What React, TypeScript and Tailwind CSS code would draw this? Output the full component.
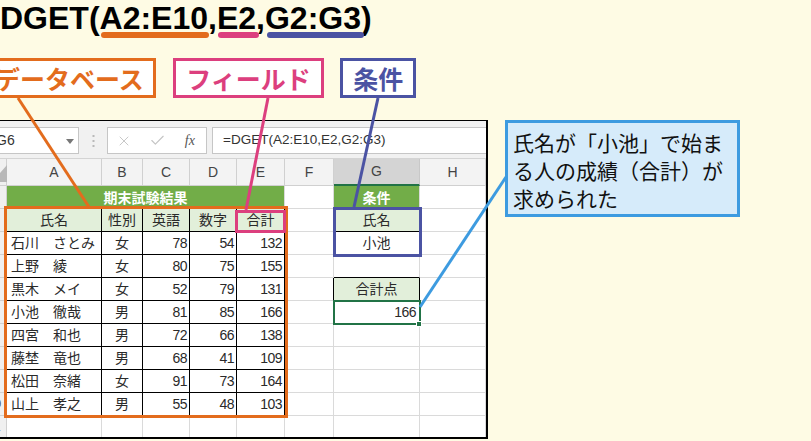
import React from "react";
import { X, Check } from "lucide-react";

const OR = "#e36c1d";
const PK = "#dc3f7e";
const BL = "#4b53a3";

function Cell({ c = "", children }: { c?: string; children?: React.ReactNode }) {
  return (
    <div className={"flex h-[23px] items-center overflow-hidden whitespace-nowrap border-r border-b " + c}>
      {children}
    </div>
  );
}

function RH({ n }: { n: number }) {
  return (
    <Cell c="bg-[#f0f0f0] border-[#d0d0d0] text-[13px] text-[#555]">
      <span className="ml-[-19px] w-[26px] shrink-0 text-center">{n}</span>
    </Cell>
  );
}

const GR = "border-[#dadada]";
const BK = "border-black";

type Row = { s: string; g: string; sex: string; a: number; b: number; t: number };
const rows: Row[] = [
  { s: "石川", g: "さとみ", sex: "女", a: 78, b: 54, t: 132 },
  { s: "上野", g: "綾", sex: "女", a: 80, b: 75, t: 155 },
  { s: "黒木", g: "メイ", sex: "女", a: 52, b: 79, t: 131 },
  { s: "小池", g: "徹哉", sex: "男", a: 81, b: 85, t: 166 },
  { s: "四宮", g: "和也", sex: "男", a: 72, b: 66, t: 138 },
  { s: "藤埜", g: "竜也", sex: "男", a: 68, b: 41, t: 109 },
  { s: "松田", g: "奈緒", sex: "女", a: 91, b: 73, t: 164 },
  { s: "山上", g: "孝之", sex: "男", a: 55, b: 48, t: 103 },
];

function gCell(i: number) {
  if (i === 0) return <Cell c={"justify-center bg-white " + BK}>小池</Cell>;
  if (i === 1) return <Cell c="border-r-[#dadada] border-b-black" />;
  if (i === 2) return <Cell c={"justify-center bg-[#e2efda] " + BK}>合計点</Cell>;
  if (i === 3)
    return (
      <Cell c={"justify-end pr-[3px] " + GR}>
        <span className="tracking-[-0.5px]">166</span>
      </Cell>
    );
  return <Cell c={GR} />;
}

function fCell(i: number) {
  if (i === 0 || i === 2) return <Cell c="border-r-black border-b-[#dadada]" />;
  return <Cell c={GR} />;
}

export default function App() {
  return (
    <div className="relative h-[441px] w-[811px] overflow-hidden bg-[#fefbe4] font-['Liberation_Sans','Noto_Sans_CJK_JP',sans-serif]">
      {/* title */}
      <div className="mt-[2px] flex h-[32px] text-[32px] font-bold leading-[32px] text-black">
        <span>DGET(</span>
        <span className="relative">
          A2:E10
          <span className="absolute left-[1px] right-[-1px] top-[30px] h-[6px] rounded-full bg-[#e36c1d]" />
        </span>
        <span>,</span>
        <span className="relative">
          E2
          <span className="absolute left-[1px] right-[-3px] top-[30px] h-[6px] rounded-full bg-[#dc3f7e]" />
        </span>
        <span>,</span>
        <span className="relative">
          G2:G3
          <span className="absolute left-[2px] right-[-3px] top-[30px] h-[6px] rounded-full bg-[#4b53a3]" />
        </span>
        <span>)</span>
      </div>

      {/* labels */}
      <div className="mt-[24px] flex h-[40px] font-['Noto_Sans_CJK_JP',sans-serif] text-[25px] font-bold leading-[34px]">
        <div className="ml-[-17px] border-[3px] border-[#e36c1d] bg-white px-[9px] text-[#e36c1d]">データベース</div>
        <div className="ml-[17px] border-[3px] border-[#dc3f7e] bg-white px-[10.5px] text-[#dc3f7e]">フィールド</div>
        <div className="ml-[16px] border-[3px] border-[#4b53a3] bg-white px-[10px] text-[#4b53a3]">条件</div>
      </div>

      {/* main */}
      <div className="mt-[22px] flex items-start">
        <div className="relative h-[319px] w-[488px] overflow-hidden border-t border-r-2 border-b-2 border-black bg-white text-[14px] text-[#2a2a2a]">
          {/* formula bar */}
          <div className="flex h-[38px] items-start border-b border-[#d4d4d4] bg-[#f1f1f1] pt-[6px]">
            <div className="relative ml-[-1px] flex h-[27px] w-[80px] shrink-0 items-center border border-[#c6c6c6] bg-white">
              <span className="ml-[-4px] text-[14px] text-[#333]">G6</span>
              <svg className="absolute left-[66px] top-[11px]" width="8" height="5" viewBox="0 0 8 5">
                <path d="M0 0 L8 0 L4 5 Z" fill="#777" />
              </svg>
            </div>
            <div className="flex h-[27px] w-[28px] shrink-0 items-center justify-center">
              <svg width="3" height="12" viewBox="0 0 3 12">
                <rect x="0.5" y="0" width="2" height="2" fill="#b9b9b9" />
                <rect x="0.5" y="5" width="2" height="2" fill="#b9b9b9" />
                <rect x="0.5" y="10" width="2" height="2" fill="#b9b9b9" />
              </svg>
            </div>
            <div className="flex h-[27px] w-[100px] shrink-0 items-center border border-[#c6c6c6] bg-white">
              <div className="flex w-[33px] justify-center">
                <X size={16} strokeWidth={1.4} color="#c4c4c4" />
              </div>
              <div className="flex w-[34px] justify-center">
                <Check size={17} strokeWidth={1.6} color="#c4c4c4" />
              </div>
              <div className="flex w-[33px] justify-center font-['Liberation_Serif',serif] text-[14px] italic text-[#555]">fx</div>
            </div>
            <div className="ml-[5px] flex h-[27px] flex-1 items-center border border-r-0 border-[#c6c6c6] bg-white pl-[10px] text-[13.5px] text-[#333]">
              =DGET(A2:E10,E2,G2:G3)
            </div>
          </div>

          <div className="grid grid-cols-[7px_95px_41px_47px_47px_48px_49px_86px_66px]">
            {/* column headers */}
            <div className="relative h-[27px] border-r border-b border-[#d0d0d0] bg-[#f0f0f0]">
              <svg className="absolute left-0 top-0" width="7" height="26" viewBox="0 0 7 26">
                <path d="M7 6 L7 23 L0 23 L0 14 Z" fill="#b8b8b8" />
              </svg>
            </div>
            {["A", "B", "C", "D", "E", "F"].map((l) => (
              <div key={l} className="flex h-[27px] items-center justify-center border-r border-b border-[#d0d0d0] bg-[#f3f3f3] text-[14px] text-[#444]">
                {l}
              </div>
            ))}
            <div className="flex h-[27px] items-center justify-center border-r border-b-2 border-r-[#c8c8c8] border-b-[#217346] bg-[#d4d4d4] text-[14px] text-[#444]">G</div>
            <div className="flex h-[27px] items-center justify-center border-r border-b border-[#d0d0d0] bg-[#f3f3f3] text-[14px] text-[#444]">H</div>

            {/* row 1 */}
            <RH n={1} />
            <Cell c="col-span-5 justify-center border-r-[#dadada] border-b-black bg-[#72ad48] font-['Noto_Sans_CJK_JP',sans-serif] font-bold text-white">期末試験結果</Cell>
            <Cell c={GR} />
            <Cell c="justify-center border-r-[#dadada] border-b-black bg-[#72ad48] font-['Noto_Sans_CJK_JP',sans-serif] font-bold text-white">条件</Cell>
            <Cell c={GR} />

            {/* row 2 */}
            <RH n={2} />
            {["氏名", "性別", "英語", "数字", "合計"].map((h) => (
              <Cell key={h} c={"justify-center bg-[#e2efda] " + BK}>{h}</Cell>
            ))}
            <Cell c="border-r-black border-b-[#dadada]" />
            <Cell c={"justify-center bg-[#e2efda] " + BK}>氏名</Cell>
            <Cell c={GR} />

            {rows.map((r, i) => (
              <React.Fragment key={r.s}>
                <RH n={i + 3} />
                <Cell c={"pl-[4px] " + BK}>
                  <span className="inline-block w-[42px]">{r.s}</span>
                  <span>{r.g}</span>
                </Cell>
                <Cell c={"justify-center " + BK}>{r.sex}</Cell>
                <Cell c={"justify-end pr-[2px] " + BK}>
                  <span className="tracking-[-0.5px]">{r.a}</span>
                </Cell>
                <Cell c={"justify-end pr-[2px] " + BK}>
                  <span className="tracking-[-0.5px]">{r.b}</span>
                </Cell>
                <Cell c={"justify-end pr-[2px] " + BK}>
                  <span className="tracking-[-0.5px]">{r.t}</span>
                </Cell>
                {fCell(i)}
                {gCell(i)}
                <Cell c={GR} />
              </React.Fragment>
            ))}

            {/* row 11 */}
            <RH n={11} />
            {[0, 1, 2, 3, 4, 5, 6, 7].map((k) => (
              <Cell key={k} c={GR} />
            ))}
          </div>

          {/* highlight overlays */}
          <div className="pointer-events-none absolute left-[4px] top-[85px] h-[212px] w-[284px] border-[3px] border-[#e36c1d]" />
          <div className="pointer-events-none absolute left-[235px] top-[89px] h-[23px] w-[51px] border-[3px] border-[#dc3f7e]" />
          <div className="pointer-events-none absolute left-[333px] top-[86px] h-[50px] w-[89px] border-[3px] border-[#4b53a3]" />
          <div className="pointer-events-none absolute left-[333px] top-[179px] h-[25px] w-[88px] border-2 border-[#217346]" />
          <div className="pointer-events-none absolute left-[416px] top-[200px] h-[6px] w-[6px] border border-white bg-[#217346]" />
        </div>

        {/* callout */}
        <div className="ml-[17px] h-[97px] w-[235px] border-[3px] border-[#3d9be0] bg-[#d6ebfa] pl-[5px] pt-[5px] font-['Noto_Sans_CJK_JP',sans-serif] text-[21px] leading-[28px] text-[#111]">
          氏名が「小池」で始ま
          <br />
          る人の成績（合計）が
          <br />
          求められた
        </div>
      </div>

      {/* connector lines */}
      <svg className="pointer-events-none absolute left-0 top-0" width="811" height="441" viewBox="0 0 811 441">
        <line x1="18" y1="98" x2="89" y2="207" stroke={OR} strokeWidth="3" />
        <line x1="268" y1="98" x2="246" y2="210" stroke={PK} strokeWidth="3" />
        <line x1="378" y1="98" x2="354" y2="207" stroke={BL} strokeWidth="3" />
        <line x1="506" y1="177" x2="420" y2="307" stroke="#3d9be0" strokeWidth="3" />
      </svg>
    </div>
  );
}
